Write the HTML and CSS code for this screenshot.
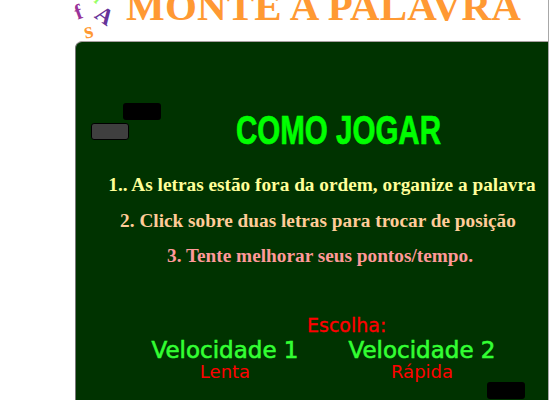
FILE: index.html
```html
<html>
    <head>
        <title>Monte a Palavra</title>
        <link rel="stylesheet" href="styles.css">
    </head>
    <body>
        <div class="page">
            <header>
                <span class="letter letter-f">f</span>
                <span class="letter letter-l">l</span>
                <span class="letter letter-a">A</span>
                <span class="letter letter-s">s</span>
                <h1>MONTE A PALAVRA</h1>
            </header>
            <main>
                <span class="tile tile-black"></span>
                <span class="tile tile-grey"></span>
                <span class="tile tile-bottom"></span>
                <h2>COMO JOGAR</h2>
                <p class="rule rule-one">1.. As letras estão fora da ordem, organize a palavra</p>
                <p class="rule rule-two">2. Click sobre duas letras para trocar de posição</p>
                <p class="rule rule-three">3. Tente melhorar seus pontos/tempo.</p>
                <p class="choose">Escolha:</p>
                <section class="speeds">
                    <div class="speed">
                        <strong>Velocidade 1</strong>
                        <span>Lenta</span>
                    </div>
                    <div class="speed">
                        <strong>Velocidade 2</strong>
                        <span>Rápida</span>
                    </div>
                </section>
            </main>
        </div>
    </body>
</html>
```

FILE: styles.css
```css
html, body {
    margin: 0;
    height: 100%;
    overflow: hidden;
    background-color: white;
}

.page {
    position: relative;
    width: 549px;
    height: 400px;
    box-sizing: border-box;
    border-right: 1px solid #a8a8a8;
    overflow: hidden;
}

header {
    height: 41px;
    text-align: center;
}

h1 {
    margin: 0;
    padding-left: 99px;
    font: bold 41px/13px "Liberation Serif", serif;
    letter-spacing: 0.15px;
    color: #ff9933;
    white-space: nowrap;
}

.letter {
    position: absolute;
    font-family: "Liberation Serif", serif;
    font-weight: bold;
}

.letter-f {
    left: 75px;
    top: 0;
    font-size: 21px;
    color: #993399;
    transform: rotate(-20deg);
}

.letter-l {
    left: 96px;
    top: -10px;
    font-size: 16px;
    color: #99ff66;
    transform: rotate(40deg);
}

.letter-a {
    left: 96px;
    top: 3px;
    font-size: 23px;
    color: #663399;
    transform: rotate(35deg);
}

.letter-s {
    left: 84px;
    top: 18px;
    font-size: 23px;
    color: #ff9933;
    transform: rotate(-12deg);
}

main {
    position: relative;
    height: 359px;
    margin-left: 75px;
    box-sizing: border-box;
    padding-top: 67px;
    background-color: #003300;
    border-top: 1px solid #a8a0a0;
    border-left: 1px solid #777;
    border-top-left-radius: 7px;
}

.tile {
    position: absolute;
    width: 38px;
    height: 17px;
    background-color: black;
    border-radius: 3px;
}

.tile-black {
    left: 47px;
    top: 61px;
}

.tile-grey {
    left: 15px;
    top: 81px;
    width: 36px;
    height: 15px;
    background-color: #3f3f3f;
    border: 1px solid black;
}

.tile-bottom {
    left: 411px;
    top: 340px;
}

h2 {
    margin: 0 0 0 53px;
    font: bold 41px/42px "Liberation Sans", sans-serif;
    -webkit-text-stroke: 0.7px #00ff00;
    color: #00ff00;
    text-align: center;
    transform: scaleX(0.72);
    white-space: nowrap;
}

.rule {
    margin: 0;
    height: 35.5px;
    font: bold 19.3px/20px "Liberation Serif", serif;
    text-align: center;
    white-space: nowrap;
}

.rule-one {
    margin-top: 24px;
    padding-left: 20px;
    color: #ffff99;
}

.rule-two {
    padding-left: 12px;
    color: #ffcc99;
}

.rule-three {
    padding-left: 16px;
    color: #ff9999;
}

.choose {
    margin: 33px 0 0 231px;
    font: 19px/20px "DejaVu Sans", sans-serif;
    -webkit-text-stroke: 0.3px red;
    color: red;
}

.speeds {
    display: flex;
    gap: 51px;
    padding-left: 76px;
}

.speed {
    display: flex;
    flex-direction: column;
    align-items: center;
    width: 146px;
}

.speed strong {
    font: 23px/30px "DejaVu Sans", sans-serif;
    -webkit-text-stroke: 0.6px #33ff33;
    color: #33ff33;
    white-space: nowrap;
}

.speed span {
    font: 18px/14px "DejaVu Sans", sans-serif;
    color: red;
}
```
